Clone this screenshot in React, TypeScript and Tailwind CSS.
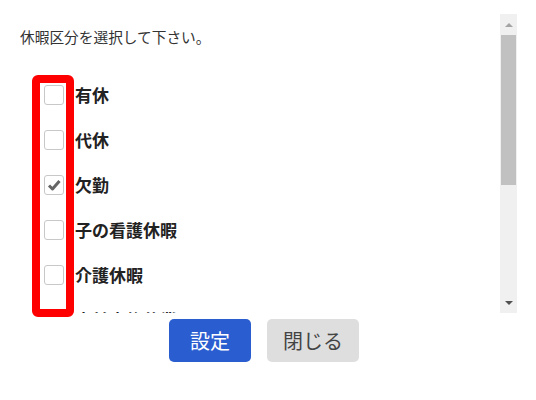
const items = [
  { label: "有休", checked: false },
  { label: "代休", checked: false },
  { label: "欠勤", checked: true },
  { label: "子の看護休暇", checked: false },
  { label: "介護休暇", checked: false },
  { label: "産前産後休業", checked: false },
];

function Box({ checked }: { checked: boolean }) {
  return (
    <div className="w-[20px] h-[20px] shrink-0 rounded-[3px] border border-[#c8c8c8] bg-white flex items-center justify-center">
      {checked && (
        <svg width="14" height="12" viewBox="0 0 14 12">
          <path d="M2 6.5 L5.5 10 L12.5 2" fill="none" stroke="#666" strokeWidth="3" strokeLinejoin="round" />
        </svg>
      )}
    </div>
  );
}

export default function App() {
  return (
    <div
      className="relative w-[536px] h-[400px] bg-white overflow-hidden"
      style={{ fontFamily: '"Noto Sans CJK JP", "Noto Sans", sans-serif' }}
    >
      {/* Scroll region */}
      <div className="flex mt-[14px] h-[299px] w-[517px]">
        <div className="flex-1 overflow-hidden pl-[20px] pt-[13px]">
          <p className="text-[14.7px] leading-[20px] text-[#333] whitespace-nowrap">休暇区分を選択して下さい。</p>
          <div className="mt-[25px] pl-[24px]">
            {items.map((it) => (
              <div key={it.label} className="h-[45px] flex items-center gap-[11px]">
                <Box checked={it.checked} />
                <span className="text-[17px] font-bold text-[#222] leading-none whitespace-nowrap">{it.label}</span>
              </div>
            ))}
          </div>
        </div>

        {/* Scrollbar */}
        <div className="w-[17px] h-full bg-[#f0f0f0] flex flex-col items-center">
          <div className="h-[21px] w-full flex items-center justify-center">
            <div className="w-0 h-0 border-l-[4px] border-r-[4px] border-b-[4px] border-l-transparent border-r-transparent border-b-[#a3a3a3]" />
          </div>
          <div className="w-[15px] h-[150px] bg-[#c1c1c1]" />
          <div className="flex-1" />
          <div className="h-[21px] w-full flex items-center justify-center">
            <div className="w-0 h-0 border-l-[4px] border-r-[4px] border-t-[4px] border-l-transparent border-r-transparent border-t-[#505050]" />
          </div>
        </div>
      </div>

      {/* Buttons */}
      <div className="flex justify-center gap-[16px] mt-[6px] w-[528px]">
        <button className="w-[82px] h-[43px] rounded-[5px] bg-[#2a5dd0] text-white text-[20px]">設定</button>
        <button className="w-[92px] h-[43px] rounded-[5px] bg-[#dedede] text-[#444] text-[20px]">閉じる</button>
      </div>

      {/* Highlight annotation */}
      <div className="absolute left-[32px] top-[75px] w-[42px] h-[242px] border-[8px] border-[#ff0000] rounded-[6px]" />
    </div>
  );
}
